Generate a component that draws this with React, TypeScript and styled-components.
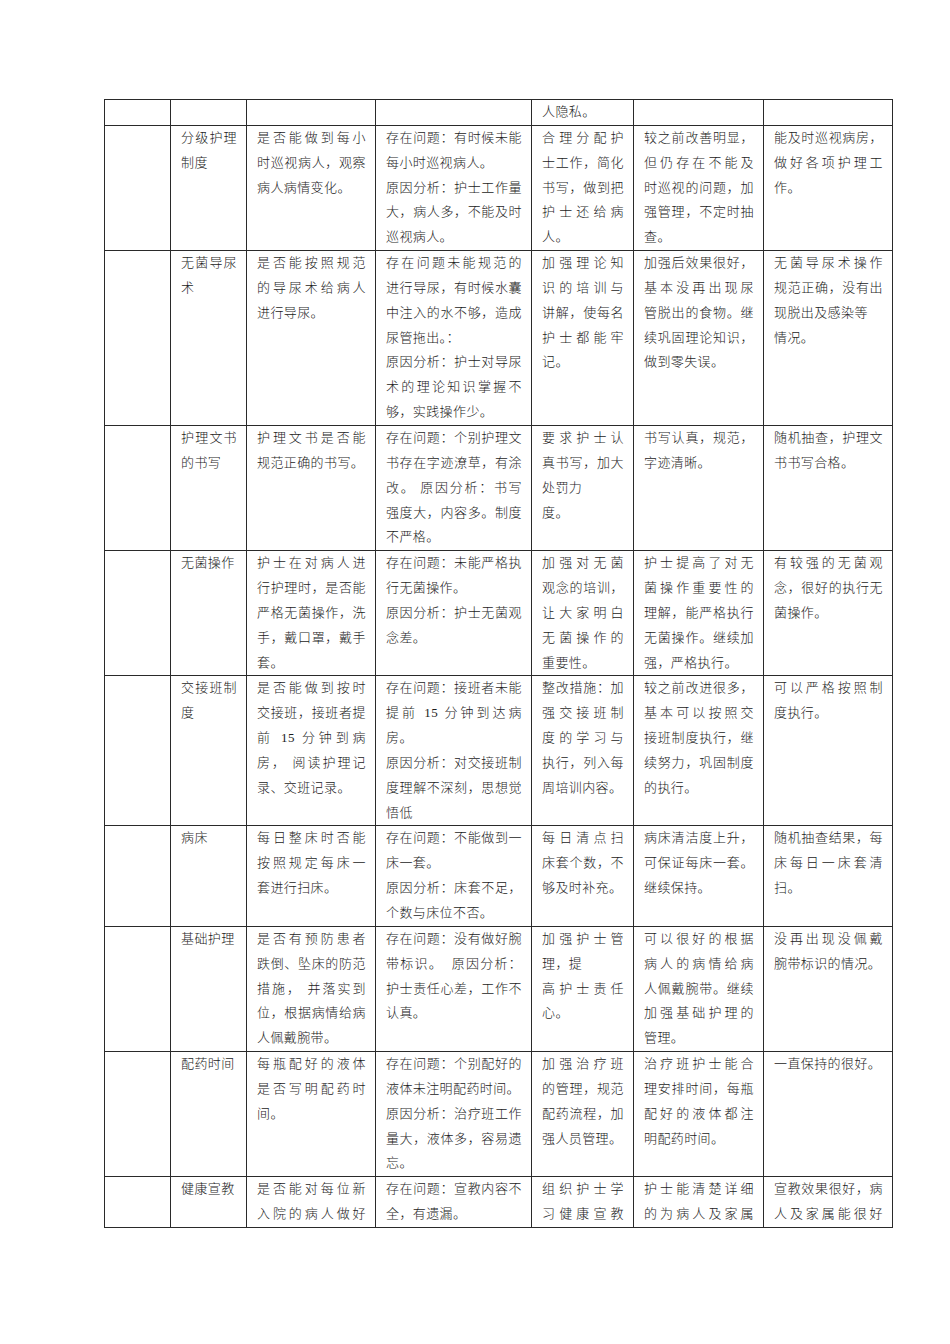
import styled, { createGlobalStyle } from "styled-components";

const GlobalStyle = createGlobalStyle`
  html, body {
    margin: 0;
    padding: 0;
    background: #ffffff;
  }
  body {
    font-family: "Liberation Serif", "Noto Sans CJK SC", serif;
    color: #1c1c1c;
  }
`;

type Cell = string[][]; // 段落 -> 行
interface RowData {
  cells: Cell[];
  cont?: number[]; // 下一页继续的单元格，最后一行也两端对齐
}

const colWidths = [66, 76, 129, 156, 102, 130, 129];

const rows: RowData[] = [
  {
    cells: [[], [], [], [], [["人隐私。"]], [], []],
  },
  {
    cells: [
      [],
      [["分级护理", "制度"]],
      [["是否能做到每小", "时巡视病人，观察", "病人病情变化。"]],
      [
        ["存在问题：有时候未能", "每小时巡视病人。"],
        ["原因分析：护士工作量", "大，病人多，不能及时", "巡视病人。"],
      ],
      [["合理分配护", "士工作，简化", "书写，做到把", "护士还给病", "人。"]],
      [["较之前改善明显，", "但仍存在不能及", "时巡视的问题，加", "强管理，不定时抽", "查。"]],
      [["能及时巡视病房，", "做好各项护理工", "作。"]],
    ],
  },
  {
    cells: [
      [],
      [["无菌导尿", "术"]],
      [["是否能按照规范", "的导尿术给病人", "进行导尿。"]],
      [
        ["存在问题未能规范的", "进行导尿，有时候水囊", "中注入的水不够，造成", "尿管拖出。："],
        ["原因分析：护士对导尿", "术的理论知识掌握不", "够，实践操作少。"],
      ],
      [["加强理论知", "识的培训与", "讲解，使每名", "护士都能牢", "记。"]],
      [["加强后效果很好，", "基本没再出现尿", "管脱出的食物。继", "续巩固理论知识，", "做到零失误。"]],
      [["无菌导尿术操作", "规范正确，没有出", "现脱出及感染等"], ["情况。"]],
    ],
  },
  {
    cells: [
      [],
      [["护理文书", "的书写"]],
      [["护理文书是否能", "规范正确的书写。"]],
      [["存在问题：个别护理文", "书存在字迹潦草，有涂", "改。 原因分析：书写", "强度大，内容多。制度", "不严格。"]],
      [["要求护士认", "真书写，加大", "处罚力"], ["度。"]],
      [["书写认真，规范，", "字迹清晰。"]],
      [["随机抽查，护理文", "书书写合格。"]],
    ],
  },
  {
    cells: [
      [],
      [["无菌操作"]],
      [["护士在对病人进", "行护理时，是否能", "严格无菌操作，洗", "手，戴口罩，戴手", "套。"]],
      [
        ["存在问题：未能严格执", "行无菌操作。"],
        ["原因分析：护士无菌观", "念差。"],
      ],
      [["加强对无菌", "观念的培训，", "让大家明白", "无菌操作的", "重要性。"]],
      [["护士提高了对无", "菌操作重要性的", "理解，能严格执行", "无菌操作。继续加", "强，严格执行。"]],
      [["有较强的无菌观", "念，很好的执行无", "菌操作。"]],
    ],
  },
  {
    cells: [
      [],
      [["交接班制", "度"]],
      [["是否能做到按时", "交接班，接班者提", "前 15 分钟到病", "房， 阅读护理记", "录、交班记录。"]],
      [
        ["存在问题：接班者未能", "提前 15 分钟到达病", "房。"],
        ["原因分析：对交接班制", "度理解不深刻，思想觉", "悟低"],
      ],
      [["整改措施：加", "强交接班制", "度的学习与", "执行，列入每", "周培训内容。"]],
      [["较之前改进很多，", "基本可以按照交", "接班制度执行，继", "续努力，巩固制度", "的执行。"]],
      [["可以严格按照制", "度执行。"]],
    ],
  },
  {
    cells: [
      [],
      [["病床"]],
      [["每日整床时否能", "按照规定每床一", "套进行扫床。"]],
      [
        ["存在问题：不能做到一", "床一套。"],
        ["原因分析：床套不足，", "个数与床位不否。"],
      ],
      [["每日清点扫", "床套个数，不", "够及时补充。"]],
      [["病床清洁度上升，", "可保证每床一套。", "继续保持。"]],
      [["随机抽查结果，每", "床每日一床套清", "扫。"]],
    ],
  },
  {
    cells: [
      [],
      [["基础护理"]],
      [["是否有预防患者", "跌倒、坠床的防范", "措施， 并落实到", "位，根据病情给病", "人佩戴腕带。"]],
      [["存在问题：没有做好腕", "带标识。  原因分析：", "护士责任心差，工作不", "认真。"]],
      [["加强护士管", "理，提"], ["高护士责任", "心。"]],
      [["可以很好的根据", "病人的病情给病", "人佩戴腕带。继续", "加强基础护理的", "管理。"]],
      [["没再出现没佩戴", "腕带标识的情况。"]],
    ],
  },
  {
    cells: [
      [],
      [["配药时间"]],
      [["每瓶配好的液体", "是否写明配药时", "间。"]],
      [
        ["存在问题：个别配好的", "液体未注明配药时间。"],
        ["原因分析：治疗班工作", "量大，液体多，容易遗", "忘。"],
      ],
      [["加强治疗班", "的管理，规范", "配药流程，加", "强人员管理。"]],
      [["治疗班护士能合", "理安排时间，每瓶", "配好的液体都注", "明配药时间。"]],
      [["一直保持的很好。"]],
    ],
  },
  {
    cont: [2, 4, 5, 6],
    cells: [
      [],
      [["健康宣教"]],
      [["是否能对每位新", "入院的病人做好"]],
      [["存在问题：宣教内容不", "全，有遗漏。"]],
      [["组织护士学", "习健康宣教"]],
      [["护士能清楚详细", "的为病人及家属"]],
      [["宣教效果很好，病", "人及家属能很好"]],
    ],
  },
];

function App() {
  return (
    <>
      <GlobalStyle />
      <Page>
        <Sheet>
          <colgroup>
            {colWidths.map((w, i) => (
              <col key={i} style={{ width: w }} />
            ))}
          </colgroup>
          <tbody>
            {rows.map((row, r) => (
              <tr key={r}>
                {row.cells.map((cell, c) => {
                  const goesOn = row.cont?.includes(c) ?? false;
                  return (
                    <Td key={c}>
                      {cell.map((para, p) => (
                        <div key={p}>
                          {para.map((line, l) => {
                            const last = l === para.length - 1;
                            const justify = !last || (goesOn && p === cell.length - 1);
                            return (
                              <Line key={l} $justify={justify}>
                                {line}
                              </Line>
                            );
                          })}
                        </div>
                      ))}
                    </Td>
                  );
                })}
              </tr>
            ))}
          </tbody>
        </Sheet>
      </Page>
    </>
  );
}

const Page = styled.div`
  width: 950px;
  min-height: 1344px;
  box-sizing: border-box;
  padding: 99px 0 0 104px;
`;

const Sheet = styled.table`
  width: 788px;
  table-layout: fixed;
  border-collapse: collapse;
  border-spacing: 0;
`;

const Td = styled.td`
  border: 1px solid #2a2a2a;
  padding: 0 9px 0 10px;
  vertical-align: top;
  font-size: 13px;
  font-weight: 300;
  line-height: 24.85px;
  letter-spacing: 0.4px;
`;

const Line = styled.span<{ $justify: boolean }>`
  display: block;
  text-align: justify;
  text-align-last: ${(p) => (p.$justify ? "justify" : "left")};
  text-justify: inter-character;
  white-space: pre;
`;

export default App;
